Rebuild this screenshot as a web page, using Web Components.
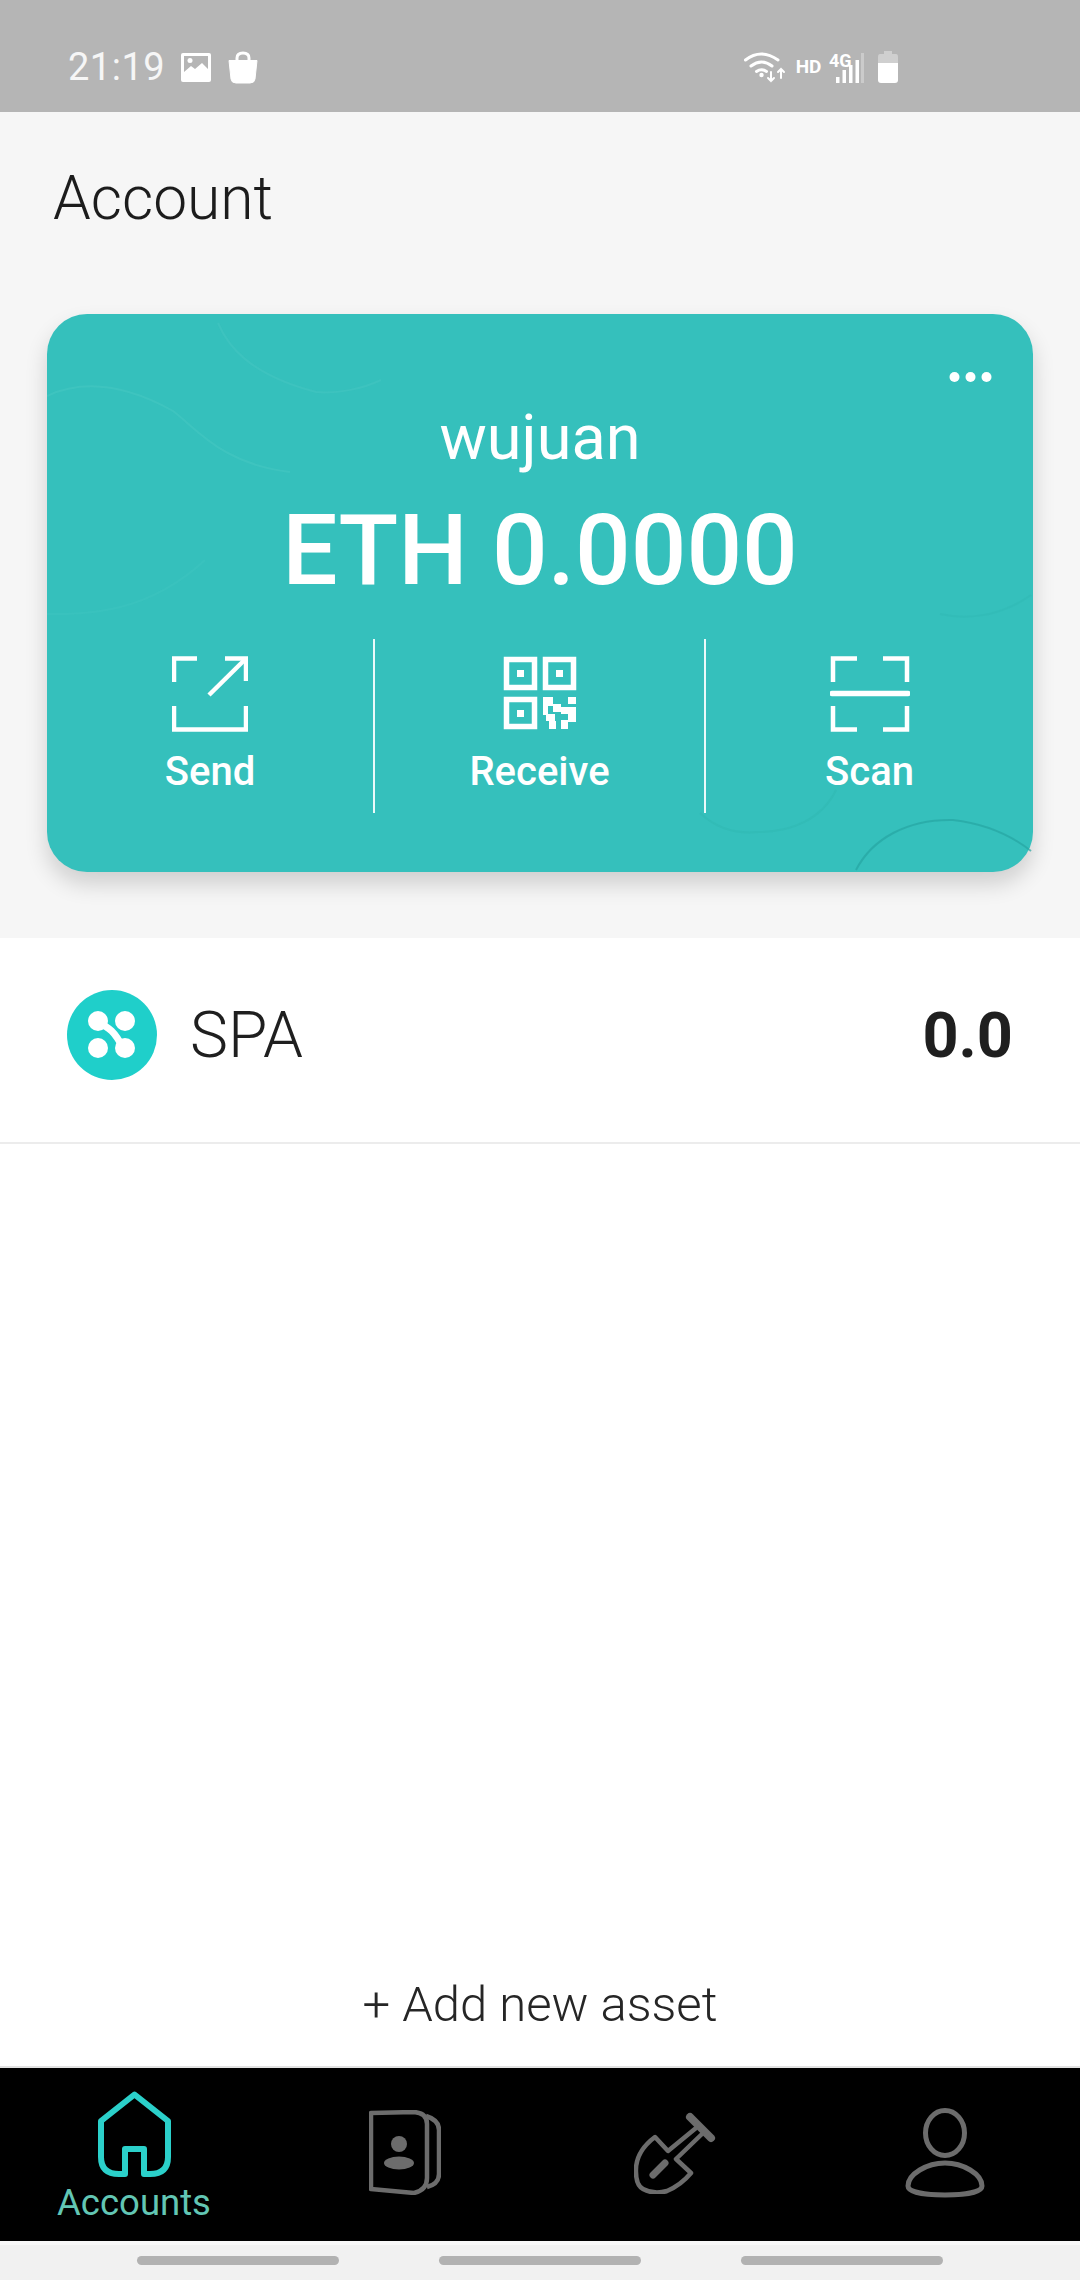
<!DOCTYPE html>
<html>
<head>
<meta charset="utf-8">
<title>Account</title>
<style>
  html, body { margin: 0; padding: 0; }
  body { width: 1080px; height: 2280px; font-family: Roboto, "Liberation Sans", sans-serif; background: #fff; overflow: hidden; }
  #app { display: flex; flex-direction: column; height: 2280px; }
</style>
</head>
<body>
<div id="app">
  <status-bar></status-bar>
  <account-section>
    <wallet-card name="wujuan" balance="ETH 0.0000">
      <card-action label="Send">
        <svg width="76" height="76" viewBox="0 0 76 76" fill="none" stroke="#fff" stroke-width="4.5"><path d="M2 26V2.5H25"/><path d="M37 39L74 2.5"/><path d="M53 2.5H74V25"/><path d="M2 50V73.5H74V50"/></svg>
      </card-action>
      <card-action label="Receive">
        <svg width="76" height="76" viewBox="-2 -1 76 76" fill="none" stroke="#fff" stroke-width="5.5">
          <rect x="2.5" y="2.5" width="28" height="28"/><rect x="41.5" y="2.5" width="28" height="28"/><rect x="2.5" y="42.5" width="28" height="27"/>
          <g fill="#fff" stroke="none">
            <rect x="13" y="13" width="7" height="7"/><rect x="52" y="13" width="7" height="7"/><rect x="13" y="53" width="7" height="7"/>
            <rect x="39" y="40" width="10" height="9"/><rect x="64" y="40" width="8" height="7"/><rect x="49" y="47" width="8" height="8"/><rect x="39" y="49" width="5" height="9"/><rect x="57" y="50" width="15" height="7"/><rect x="42" y="57" width="9" height="7"/><rect x="64" y="57" width="8" height="8"/><rect x="45" y="64" width="7" height="8"/><rect x="57" y="63" width="7" height="9"/>
          </g>
        </svg>
      </card-action>
      <card-action label="Scan">
        <svg width="80" height="76" viewBox="0 0 80 76" fill="none" stroke="#fff" stroke-width="4.5"><path d="M3 26V2.5H27"/><path d="M53 2.5H77V26"/><path d="M3 50V73.5H27"/><path d="M77 50V73.5H53"/><path d="M2 37.5H78" stroke-width="5.5" stroke-linecap="round"/></svg>
      </card-action>
    </wallet-card>
  </account-section>
  <asset-list>
    <asset-row symbol="SPA" amount="0.0"></asset-row>
    <add-asset slot="footer">+ Add new asset</add-asset>
  </asset-list>
  <bottom-nav>
    <nav-tab active label="Accounts">
      <svg width="74" height="86" viewBox="0 0 74 86" fill="none" stroke="#2bd0ca" stroke-width="6" stroke-linejoin="round"><path d="M36.5 3.5L70 30V66Q70 83 52 83H46V58H27V83H21Q3 83 3 66V30Z"/></svg>
    </nav-tab>
    <nav-tab>
      <svg width="72" height="85" viewBox="0 0 72 85" fill="none" stroke="#6c6c6c" stroke-width="4.5" stroke-linejoin="round"><path d="M2 3L45 2Q58 3 58 14V68Q58 80 45 83L2 79Z"/><path d="M57 6Q70 10 70 20V64Q70 74 58 77"/><circle cx="30" cy="34" r="8" fill="#6c6c6c" stroke="none"/><ellipse cx="30" cy="53" rx="15" ry="6.5" fill="#6c6c6c" stroke="none"/></svg>
    </nav-tab>
    <nav-tab>
      <svg width="82" height="82" viewBox="0 0 82 82" fill="none" stroke="#6c6c6c" stroke-width="4.5" stroke-linecap="round" stroke-linejoin="round"><path d="M56 5L77 26" stroke-width="8"/><path d="M62 16L34 39L21 25Q1 40 2 60Q2 73 9 77Q20 83 33 79Q47 73 57 61L42 47L69 21"/><path d="M19 63L31 51" stroke-width="7"/></svg>
    </nav-tab>
    <nav-tab>
      <svg width="80" height="90" viewBox="0 0 80 90" fill="none" stroke="#6c6c6c" stroke-width="5"><ellipse cx="40" cy="25" rx="19.5" ry="22.5"/><path d="M3 78C3 66 22 55 40 55C58 55 77 66 77 78C77 84 60 87 40 87C20 87 3 84 3 78Z"/></svg>
    </nav-tab>
  </bottom-nav>
  <gesture-bar></gesture-bar>
</div>

<script>
// small helper, every element gets an open root with its own style + markup
class Base extends HTMLElement {
  render(html) {
    if (!this.shadowRoot) this.attachShadow({ mode: 'open' });
    this.shadowRoot.innerHTML = html;
  }
}

class StatusBar extends Base {
  connectedCallback() {
    this.render(`
      <style>
        :host { display: flex; box-sizing: border-box; height: 112px; padding: 51px 181px 0 68px; background: #b5b5b5; color: #fff; justify-content: space-between; align-items: flex-start; font-family: Roboto, sans-serif; }
        .side { display: flex; align-items: flex-start; }
        .time { font-size: 38px; line-height: 32px; font-weight: 400; letter-spacing: 0.5px; color: #f6f6f6; height: 32px; margin-right: 15px; }
        .hd { font-size: 19px; font-weight: 700; line-height: 14px; margin: 9px 8px 0 8px; letter-spacing: -0.3px; }
        .signal { position: relative; width: 36px; height: 32px; margin-right: 12px; }
        .signal svg { display: block; }
        .g4 { position: absolute; left: 0; top: 2px; font-size: 18px; line-height: 15px; font-weight: 700; letter-spacing: -0.2px; }
        svg { display: block; }
      </style>
      <div class="side">
        <span class="time">21:19</span>
        <svg width="32" height="32" viewBox="0 0 32 32" style="margin-right:15px">
          <rect x="1" y="2" width="30" height="29" rx="2" fill="#fff"/>
          <path d="M4 5H28V18L22 12L15 18L11 15L4 21Z" fill="#b5b5b5"/>
          <circle cx="10" cy="9.5" r="2.5" fill="#fff"/>
        </svg>
        <svg width="32" height="33" viewBox="0 0 32 33">
          <path d="M10 12V7Q10 2 16 2Q22 2 22 7V12" fill="none" stroke="#fff" stroke-width="3"/>
          <path d="M2 9.5H30L28 28Q27.5 32 23 32H9Q4.5 32 4 28Z" fill="#fff" stroke="#fff" stroke-width="1" stroke-linejoin="round"/>
        </svg>
      </div>
      <div class="side">
        <svg width="44" height="32" viewBox="0 0 44 32" fill="none" stroke="#fff" stroke-width="3" stroke-linecap="round">
          <path d="M1.5 9Q17 -3 34 9"/><path d="M7 15Q17.5 7 28 15"/><path d="M12.5 20.5Q17.5 17 22.5 20.5"/>
          <circle cx="17.5" cy="24" r="2.2" fill="#fff" stroke="none"/>
          <path d="M27 21V30M24 27L27 30L30 27" stroke-width="2"/><path d="M37 27V18M34 21L37 18L40 21" stroke-width="2"/>
        </svg>
        <span class="hd">HD</span>
        <div class="signal">
          <svg width="36" height="32" viewBox="0 0 36 32" fill="#fff">
            <rect x="7" y="26" width="3.5" height="6"/><rect x="13.5" y="19" width="3.5" height="13"/><rect x="20" y="14" width="3.5" height="18"/><rect x="26.5" y="9" width="3.5" height="23"/><rect x="32" y="2" width="3" height="30" opacity=".3"/>
          </svg>
          <span class="g4">4G</span>
        </div>
        <svg width="22" height="32" viewBox="0 0 22 32">
          <path d="M7 0H15V3H19Q21 3 21 6V13H1V6Q1 3 3 3H7Z" fill="#cfcfcf"/>
          <path d="M1 12H21V29Q21 32 18 32H4Q1 32 1 29Z" fill="#fff"/>
        </svg>
      </div>`);
  }
}

class AccountSection extends Base {
  connectedCallback() {
    this.render(`
      <style>
        :host { display: block; background: #f6f6f6; padding: 0 47px 66px; }
        h1 { margin: 0; padding: 52px 0 80px 6px; font-size: 60.5px; line-height: 70px; font-weight: 300; color: #1c1c1c; font-family: Roboto, sans-serif; }
      </style>
      <h1>Account</h1>
      <slot></slot>`);
  }
}

class WalletCard extends Base {
  connectedCallback() {
    this.render(`
      <style>
        :host { display: block; position: relative; background: #35c0bc; border-radius: 40px; color: #fff; text-align: center; box-shadow: 0 12px 22px rgba(0,0,0,.16); font-family: Roboto, sans-serif; padding-bottom: 59px; }
        .waves { position: absolute; left: 0; top: 0; }
        .top { display: flex; justify-content: flex-end; padding: 58px 41px 0 0; position: relative; }
        .top svg { display: block; }
        .name { position: relative; margin-top: 21px; font-size: 63px; line-height: 70px; font-weight: 400; }
        .balance { position: relative; margin-top: 23px; font-size: 98px; line-height: 110px; font-weight: 500; }
        .actions { position: relative; display: grid; grid-template-columns: 326px 331px 329px; margin-top: 33px; height: 174px; }
      </style>
      <svg class="waves" width="986" height="558" viewBox="0 0 986 558" fill="none" stroke-width="2">
        <path d="M0 82C30 68 70 66 126 97C150 115 175 150 243 158" stroke="#4fcac5" opacity=".35"/>
        <path d="M171 9C180 30 200 60 269 78C290 80 315 75 334 66" stroke="#45c6c1" opacity=".5"/>
        <path d="M0 300C40 300 100 300 158 246" stroke="#41c5c0" opacity=".4"/>
        <path d="M809 556C825 525 860 505 906 506C940 510 965 522 984 537" stroke="#26a5a3" opacity=".7"/>
        <path d="M653 499C670 515 690 520 711 518C745 518 775 505 789 476" stroke="#2fb7b2" opacity=".5"/>
        <path d="M893 300C915 305 950 305 984 281" stroke="#2fb7b2" opacity=".4"/>
      </svg>
      <div class="top"><svg width="43" height="10" viewBox="0 0 43 10" fill="#fff"><circle cx="5.5" cy="5" r="5"/><circle cx="21.5" cy="5" r="5"/><circle cx="37.5" cy="5" r="5"/></svg></div>
      <div class="name">${this.getAttribute('name')}</div>
      <div class="balance">${this.getAttribute('balance')}</div>
      <div class="actions"><slot></slot></div>`);
  }
}

class CardAction extends Base {
  connectedCallback() {
    this.render(`
      <style>
        :host { display: flex; flex-direction: column; align-items: center; box-sizing: border-box; padding-top: 17px; }
        :host(:not(:first-child)) { border-left: 2.5px solid #eafafa; }
        .ic { height: 75px; }
        .lb { margin-top: 19px; font-size: 40px; line-height: 44px; font-weight: 500; }
      </style>
      <div class="ic"><slot></slot></div>
      <div class="lb">${this.getAttribute('label')}</div>`);
  }
}

class AssetList extends Base {
  connectedCallback() {
    this.render(`
      <style>
        :host { display: flex; flex-direction: column; flex: 1; background: #fff; }
        .rows { flex: 1; }
      </style>
      <div class="rows"><slot></slot></div>
      <slot name="footer"></slot>`);
  }
}

class AssetRow extends Base {
  connectedCallback() {
    this.render(`
      <style>
        :host { display: flex; align-items: center; box-sizing: border-box; height: 206px; padding: 0 67px 10px 67px; border-bottom: 2px solid #ececec; color: #1f1f1f; font-family: Roboto, sans-serif; }
        svg { display: block; margin-right: 33px; }
        .sym { flex: 1; margin-top: 2px; font-size: 64px; line-height: 70px; font-weight: 300; }
        .amt { margin-top: 2px; font-size: 63px; line-height: 70px; font-weight: 700; }
      </style>
      <svg width="90" height="90" viewBox="0 0 90 90">
        <circle cx="45" cy="45" r="45" fill="#1fcfca"/>
        <g fill="#fff"><circle cx="31" cy="31" r="10"/><circle cx="58" cy="31" r="10"/><circle cx="31" cy="58" r="10"/><circle cx="58" cy="58" r="10"/></g>
        <path d="M31 33C42 37 48 42 56 58" fill="none" stroke="#fff" stroke-width="7"/>
      </svg>
      <span class="sym">${this.getAttribute('symbol')}</span>
      <span class="amt">${this.getAttribute('amount')}</span>`);
  }
}

class AddAsset extends Base {
  connectedCallback() {
    this.render(`
      <style>
        :host { display: block; text-align: center; padding-bottom: 31px; font-size: 49px; line-height: 60px; font-weight: 300; color: #262626; font-family: Roboto, sans-serif; }
      </style>
      <slot></slot>`);
  }
}

class BottomNav extends Base {
  connectedCallback() {
    this.render(`
      <style>
        :host { display: grid; grid-template-columns: repeat(4, 270px); height: 173px; background: #000; border-top: 2px solid #e2e2e2; }
      </style>
      <slot></slot>`);
  }
}

class NavTab extends Base {
  connectedCallback() {
    const active = this.hasAttribute('active');
    this.render(`
      <style>
        :host { display: flex; flex-direction: column; align-items: center; box-sizing: border-box; justify-content: ${active ? 'flex-start' : 'center'}; padding: ${active ? '23px 0 0' : '0 0 4px'}; }
        ::slotted(svg) { display: block; }
        .lb { margin-top: 6px; margin-right: 2px; font-size: 36.5px; line-height: 40px; font-weight: 400; color: #62c6b4; font-family: Roboto, sans-serif; }
      </style>
      <slot></slot>
      ${active ? `<div class="lb">${this.getAttribute('label')}</div>` : ''}`);
  }
}

class GestureBar extends Base {
  connectedCallback() {
    this.render(`
      <style>
        :host { display: flex; justify-content: center; gap: 100px; box-sizing: border-box; height: 39px; padding-top: 11px; background: #f1f1f1; border-top: 4px solid #f8f8f8; }
        i { display: block; width: 202px; height: 9px; border-radius: 5px; background: #b2b2b2; }
      </style>
      <i></i><i></i><i></i>`);
  }
}

customElements.define('status-bar', StatusBar);
customElements.define('account-section', AccountSection);
customElements.define('wallet-card', WalletCard);
customElements.define('card-action', CardAction);
customElements.define('asset-list', AssetList);
customElements.define('asset-row', AssetRow);
customElements.define('add-asset', AddAsset);
customElements.define('bottom-nav', BottomNav);
customElements.define('nav-tab', NavTab);
customElements.define('gesture-bar', GestureBar);
</script>
</body>
</html>
